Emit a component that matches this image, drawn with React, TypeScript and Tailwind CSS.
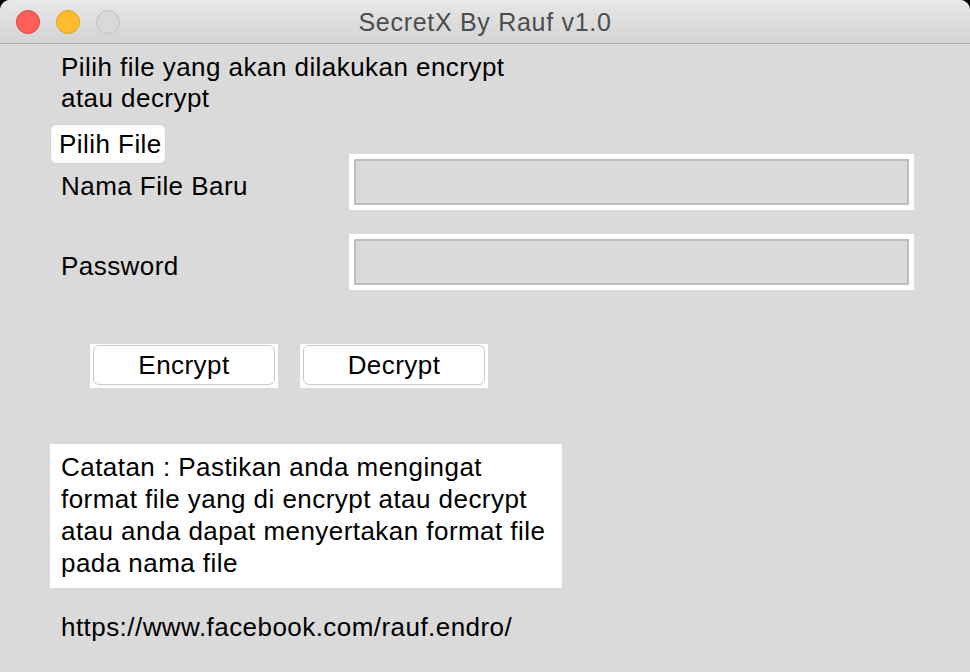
export default function App() {
  return (
    <div
      className="w-[970px] h-[672px] bg-black overflow-hidden"
      style={{ fontFamily: '"Liberation Sans", Arial, sans-serif' }}
    >
      <div className="w-full h-full rounded-t-[10px] bg-[#dadada] overflow-hidden flex flex-col">
        {/* title bar */}
        <div className="relative h-[44px] shrink-0 bg-gradient-to-b from-[#e8e8e8] to-[#d3d3d3] border-b border-[#b1b1b1] flex items-center">
          <div className="flex items-center gap-[16px] pl-[16px]">
            <span className="w-[24px] h-[24px] rounded-full bg-[#fe5f57] border border-[#e0443e]" />
            <span className="w-[24px] h-[24px] rounded-full bg-[#febc2e] border border-[#dea123]" />
            <span className="w-[24px] h-[24px] rounded-full bg-[#d9d9d9] border border-[#bfbfbf]" />
          </div>
          <div className="absolute inset-0 flex items-center justify-center pt-[2px] text-[25px] tracking-[0.7px] text-[#4d4d4d]">
            SecretX By Rauf v1.0
          </div>
        </div>

        {/* body */}
        <div className="flex-1 text-[26px] tracking-[0.45px] text-black leading-[31px]">
          <div className="pl-[61px] pt-[8px]">
            Pilih file yang akan dilakukan encrypt
            <br />
            atau decrypt
          </div>

          <div className="pl-[50px] mt-[10px]">
            <button className="w-[116px] h-[40px] bg-white rounded-[6px] border border-[#d0d0d0] text-left pl-[8px] text-[26px] leading-[38px]">
              Pilih File
            </button>
          </div>

          <div className="flex items-center mt-[-10px]">
            <div className="w-[349px] pl-[61px] pt-[8px]">Nama File Baru</div>
            <div className="w-[565px] h-[56px] bg-white p-[5px]">
              <div className="w-full h-full bg-[#dadada] border-2 border-[#bdbdbd]" />
            </div>
          </div>

          <div className="flex items-center mt-[24px]">
            <div className="w-[349px] pl-[61px] pt-[8px]">Password</div>
            <div className="w-[565px] h-[56px] bg-white p-[5px]">
              <div className="w-full h-full bg-[#dadada] border-2 border-[#bdbdbd]" />
            </div>
          </div>

          <div className="flex gap-[22px] pl-[90px] mt-[54px]">
            <div className="w-[188px] h-[44px] bg-white pl-[3px] pr-[3px] pt-[1px] pb-[3px]">
              <button className="w-full h-full rounded-[6px] border border-[#c8c8c8] bg-white text-[26px] leading-[38px]">
                Encrypt
              </button>
            </div>
            <div className="w-[188px] h-[44px] bg-white pl-[3px] pr-[3px] pt-[1px] pb-[3px]">
              <button className="w-full h-full rounded-[6px] border border-[#c8c8c8] bg-white text-[26px] leading-[38px]">
                Decrypt
              </button>
            </div>
          </div>

          <div className="ml-[50px] mt-[56px] w-[512px] h-[144px] bg-white pl-[11px] pt-[7px] leading-[32px]">
            Catatan : Pastikan anda mengingat
            <br />
            format file yang di encrypt atau decrypt
            <br />
            atau anda dapat menyertakan format file
            <br />
            pada nama file
          </div>

          <div className="pl-[61px] mt-[24px]">https://www.facebook.com/rauf.endro/</div>
        </div>
      </div>
    </div>
  );
}
